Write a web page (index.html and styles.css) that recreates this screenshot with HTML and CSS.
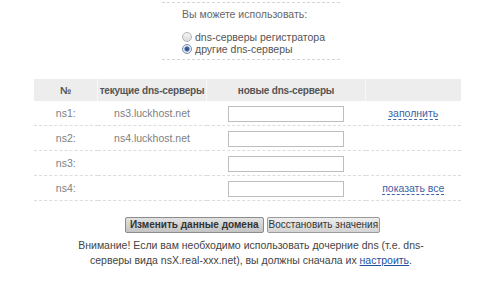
FILE: index.html
```html
<!DOCTYPE html>
<html lang="ru">
<head>
  <meta charset="UTF-8">
  <title>DNS-серверы</title>
  <link rel="stylesheet" href="styles.css">
</head>
<body>
  <div class="choice">
    <p class="choice-title">Вы можете использовать:</p>
    <label class="opt"><input type="radio" name="dns" class="radio"> dns-серверы регистратора</label>
    <label class="opt"><input type="radio" name="dns" class="radio" checked> другие dns-серверы</label>
  </div>

  <table class="ns">
    <thead>
      <tr>
        <th class="c-num">№</th>
        <th class="c-cur">текущие dns-серверы</th>
        <th class="c-new">новые dns-серверы</th>
        <th class="c-act"></th>
      </tr>
    </thead>
    <tbody>
      <tr>
        <td>ns1:</td>
        <td>ns3.luckhost.net</td>
        <td><input type="text" class="field"></td>
        <td><a href="#" class="dash">заполнить</a></td>
      </tr>
      <tr>
        <td>ns2:</td>
        <td>ns4.luckhost.net</td>
        <td><input type="text" class="field"></td>
        <td></td>
      </tr>
      <tr>
        <td>ns3:</td>
        <td></td>
        <td><input type="text" class="field"></td>
        <td></td>
      </tr>
      <tr>
        <td>ns4:</td>
        <td></td>
        <td><input type="text" class="field"></td>
        <td><a href="#" class="dash">показать все</a></td>
      </tr>
    </tbody>
  </table>

  <div class="buttons">
    <button class="btn btn-main">Изменить данные домена</button>
    <button class="btn">Восстановить значения</button>
  </div>

  <p class="note">Внимание! Если вам необходимо использовать дочерние dns (т.е. dns-<br>серверы вида nsX.real-xxx.net), вы должны сначала их <a href="#" class="link">настроить</a>.</p>
</body>
</html>
```

FILE: styles.css
```css
body {
    margin: 0;
    background: #ffffff;
    font-family: "Liberation Sans", Arial, sans-serif;
    font-size: 10.5px;
    color: #666;
}

.choice {
    width: 158px;
    margin: 2px auto 0;
    padding: 4px 0 4px 20px;
    border-top: 1px dashed #d6d6d6;
    border-bottom: 1px dashed #d6d6d6;
}

.choice-title {
    margin: 0 0 10px;
    line-height: 14px;
    color: #666;
}

.opt {
    display: flex;
    align-items: center;
    height: 12px;
    color: #555;
}

.radio {
    appearance: none;
    -webkit-appearance: none;
    width: 10px;
    height: 10px;
    margin: 0 3px 0 0;
    border: 1px solid #b4b4b4;
    border-radius: 50%;
    background: linear-gradient(#f4f4f4, #dcdcdc);
}

.radio:checked {
    border-color: #7d8ea6;
    background: radial-gradient(circle, #2d4f86 0, #3b62a3 2px, #dfe6f0 3px, #eef1f5 5px);
}

.ns {
    width: 427px;
    margin: 19px 0 0 34px;
    border-collapse: collapse;
    table-layout: fixed;
    text-align: center;
}

.ns th {
    height: 22px;
    padding: 0;
    background: #ededed;
    border-left: 1px solid #f8f8f8;
    color: #555;
    font-size: 10px;
    letter-spacing: -0.2px;
    font-weight: bold;
    white-space: nowrap;
}

.ns th:first-child { border-left: none; }

.c-num { width: 63px; }
.c-cur { width: 108px; }
.c-new { width: 158px; }

.ns td {
    height: 24px;
    padding: 0;
    border-bottom: 1px dashed #dcdcdc;
    color: #808080;
}

.field {
    box-sizing: border-box;
    width: 116px;
    height: 16px;
    margin: 1px 0 0;
    border: 1px solid #bdbdbd;
    background: #fff;
}

.dash {
    color: #3c64a8;
    text-decoration: none;
    border-bottom: 1px dashed #3c64a8;
}

.buttons {
    display: flex;
    justify-content: center;
    gap: 3px;
    margin: 16px 0 0 3px;
}

.btn {
    height: 16px;
    padding: 0 1px;
    border: 1px solid #9a9a9a;
    border-radius: 2px;
    background: linear-gradient(#eeeeee, #d4d4d4);
    font-family: "Liberation Sans", Arial, sans-serif;
    font-size: 10px;
    line-height: 14px;
    color: #333;
    white-space: nowrap;
}

.btn-main {
    padding: 0 4px;
    font-weight: bold;
    background: linear-gradient(#e2e2e2, #c4c4c4);
    border-color: #8c8c8c;
}

.note {
    margin: 5px 0 0;
    text-align: center;
    line-height: 15px;
    color: #444;
}

.link {
    color: #1f4f9c;
    text-decoration: underline;
}
```
